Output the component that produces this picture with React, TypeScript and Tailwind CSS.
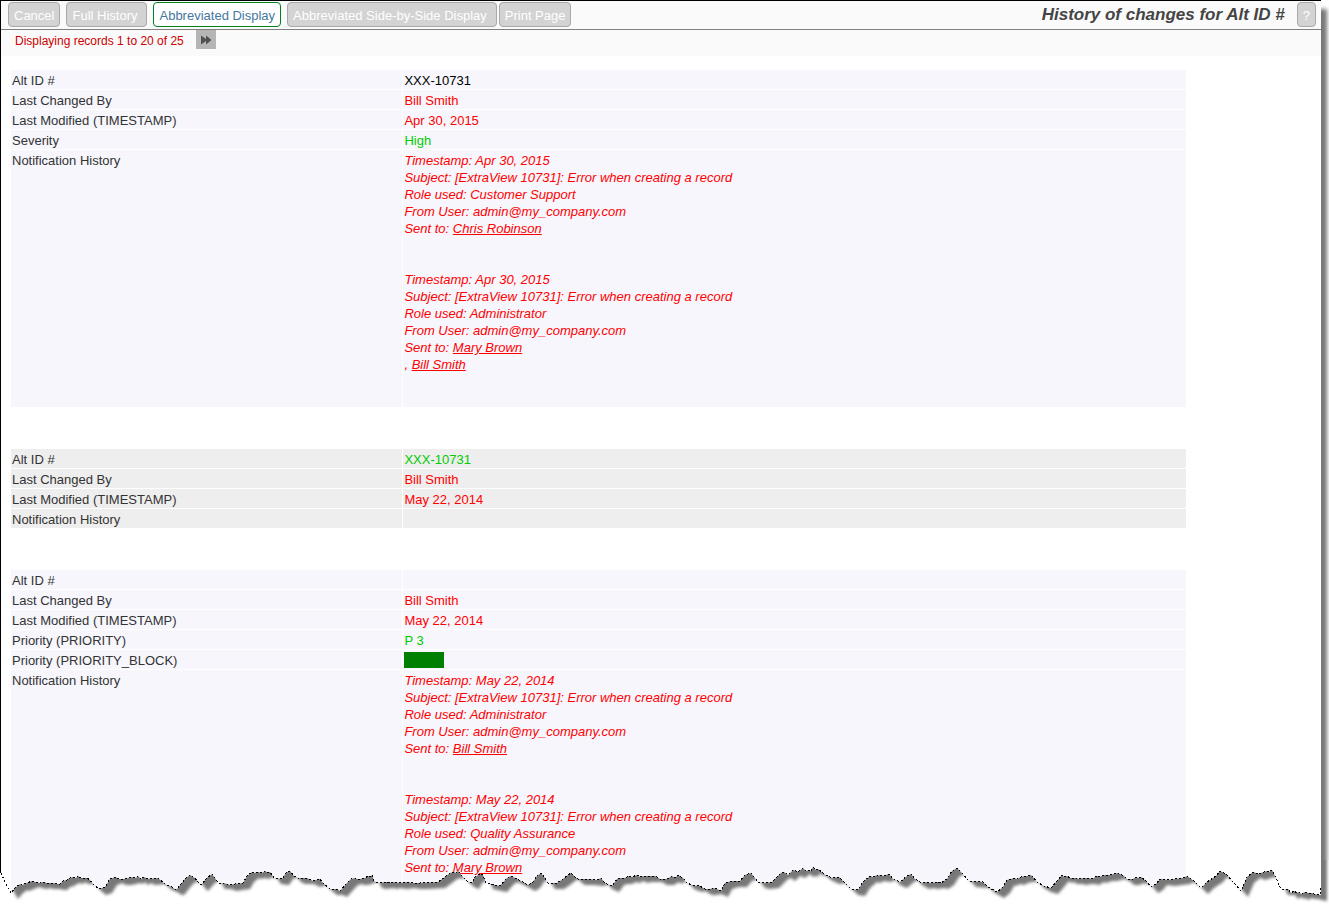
// App.tsx
// History of changes screen: toolbar, record pager and one table per change.

import { Fragment } from "react"

interface Notification {
  timestamp: string
  subject: string
  role: string
  from: string
  sentTo: string[]
}

interface Field {
  label: string
  value?: string
  tone?: "black" | "red" | "green"
  block?: boolean
  notifications?: Notification[]
}

interface Change {
  id: number
  shaded: boolean
  fields: Field[]
}

const SUBJECT = "[ExtraView 10731]: Error when creating a record"
const FROM = "admin@my_company.com"

const CHANGES: Change[] = [
  {
    id: 1,
    shaded: false,
    fields: [
      { label: "Alt ID #", value: "XXX-10731", tone: "black" },
      { label: "Last Changed By", value: "Bill Smith", tone: "red" },
      { label: "Last Modified (TIMESTAMP)", value: "Apr 30, 2015", tone: "red" },
      { label: "Severity", value: "High", tone: "green" },
      {
        label: "Notification History",
        notifications: [
          { timestamp: "Apr 30, 2015", subject: SUBJECT, role: "Customer Support", from: FROM, sentTo: ["Chris Robinson"] },
          { timestamp: "Apr 30, 2015", subject: SUBJECT, role: "Administrator", from: FROM, sentTo: ["Mary Brown", "Bill Smith"] },
        ],
      },
    ],
  },
  {
    id: 2,
    shaded: true,
    fields: [
      { label: "Alt ID #", value: "XXX-10731", tone: "green" },
      { label: "Last Changed By", value: "Bill Smith", tone: "red" },
      { label: "Last Modified (TIMESTAMP)", value: "May 22, 2014", tone: "red" },
      { label: "Notification History" },
    ],
  },
  {
    id: 3,
    shaded: false,
    fields: [
      { label: "Alt ID #" },
      { label: "Last Changed By", value: "Bill Smith", tone: "red" },
      { label: "Last Modified (TIMESTAMP)", value: "May 22, 2014", tone: "red" },
      { label: "Priority (PRIORITY)", value: "P 3", tone: "green" },
      { label: "Priority (PRIORITY_BLOCK)", block: true },
      {
        label: "Notification History",
        notifications: [
          { timestamp: "May 22, 2014", subject: SUBJECT, role: "Administrator", from: FROM, sentTo: ["Bill Smith"] },
          { timestamp: "May 22, 2014", subject: SUBJECT, role: "Quality Assurance", from: FROM, sentTo: ["Mary Brown"] },
        ],
      },
    ],
  },
]

const TONES = {
  black: "text-black",
  red: "text-[#ff0000]",
  green: "text-[#00cc00]",
}

const BUTTON = "h-[25px] rounded border px-[5px] pt-0.5 text-[13px] leading-[17px] whitespace-nowrap"
const BUTTON_OFF = "border-[#a9a9a9] bg-[#d3d3d3] text-white"
const BUTTON_ON = "border-[#008020] bg-white text-[#4477a0]"

function Toolbar() {
  return (
    <header className="flex h-[29px] items-start border-b border-[#808080] bg-[#fafafa] pt-px pr-[5px] pl-[7px]">
      <div className="flex gap-1.5">
        <button type="button" className={`${BUTTON} ${BUTTON_OFF}`}>Cancel</button>
        <button type="button" className={`${BUTTON} ${BUTTON_OFF} pr-[9px]`}>Full History</button>
        <button type="button" className={`${BUTTON} ${BUTTON_ON}`}>Abbreviated Display</button>
        <div className="flex gap-0.5">
          <button type="button" className={`${BUTTON} ${BUTTON_OFF} pr-[9px]`}>
            Abbreviated Side-by-Side Display
          </button>
          <button type="button" className={`${BUTTON} ${BUTTON_OFF}`}>Print Page</button>
        </div>
      </div>
      <h1 className="mr-3 ml-auto text-[17px] leading-[26px] font-bold text-[#444] italic">
        History of changes for Alt ID #
      </h1>
      <button type="button" aria-label="Help" className={`${BUTTON} ${BUTTON_OFF}`}>?</button>
    </header>
  )
}

function Pager() {
  return (
    <nav className="flex h-[26px] items-start gap-3 bg-[#fafafa] pl-3.5 text-xs text-[#cc0000]">
      <span className="pt-[3px]">Displaying records 1 to 20 of 25</span>
      <button type="button" aria-label="Next records" className="flex h-[19px] w-5 items-center justify-center bg-[#b5b5b5]">
        <svg width="12" height="10" viewBox="0 0 12 10" fill="#505050">
          <path d="M1 0.5 L6 4 V0.5 L11.5 5 L6 9.5 V6 L1 9.5 Z" />
        </svg>
      </button>
    </nav>
  )
}

function NotificationList({ items }: { items: Notification[] }) {
  return (
    <div className="text-[#ff0000] italic">
      {items.map((item, i) => (
        <div key={i} className="pb-[34px]">
          <p>Timestamp: {item.timestamp}</p>
          <p>Subject: {item.subject}</p>
          <p>Role used: {item.role}</p>
          <p>From User: {item.from}</p>
          <p>
            Sent to:{" "}
            {item.sentTo.map((name, n) => (
              <Fragment key={name}>
                {n > 0 && <><br />{", "}</>}
                <a href="#" className="underline">{name}</a>
              </Fragment>
            ))}
          </p>
        </div>
      ))}
    </div>
  )
}

function ChangeTable({ change }: { change: Change }) {
  const cell = change.shaded ? "bg-[#eeeeee]" : "bg-[#f6f6fc]"
  return (
    <table className="w-[90%] table-fixed border-separate border-spacing-px">
      <tbody>
        {change.fields.map((field) => (
          <tr key={field.label} className="align-top">
            <th scope="row" className={`${cell} w-1/3 px-px pt-0.5 pb-0 text-left font-normal text-[#333]`}>
              {field.label}
            </th>
            <td className={`${cell} px-px pt-0.5 pb-0 ${field.tone ? TONES[field.tone] : ""}`}>
              {field.value}
              {field.block && <div className="h-4 w-10 bg-[#008000]" />}
              {field.notifications && <NotificationList items={field.notifications} />}
            </td>
          </tr>
        ))}
      </tbody>
    </table>
  )
}

// Ragged lower edge of the sheet, left to right
const EDGE =
  "1,873 5,882 8,888 11,893 15,888 20,884 22,885 27,883 32,881 35,882 40,883 43,882 47,883 53,883 57,884 60,884 63,881 67,880 70,878 73,877 76,878 78,876 81,878 87,878 90,880 93,884 " +
  "99,889 105,887 110,879 113,878 115,877 119,879 124,879 129,878 133,877 136,878 138,876 141,879 144,877 148,879 158,878 165,884 170,886 175,889 177,889 185,879 190,875 195,878 198,882 201,885 " +
  "207,878 212,874 215,878 218,883 224,883 230,885 235,884 243,883 247,876 252,872 254,873 258,872 262,873 265,871 267,872 270,872 274,878 282,879 286,873 290,871 294,876 298,878 307,878 313,881 320,879 323,883 330,889 " +
  "336,889 340,891 347,883 351,879 355,878 357,879 360,879 365,878 368,876 370,877 372,875 374,881 378,883 387,882 390,883 393,882 400,883 407,882 413,883 420,883 438,882 445,877 450,873 454,872 456,873 458,871 462,876 467,881 472,883 475,877 480,874 483,875 486,883 495,885 500,886 " +
  "507,878 511,876 517,879 521,881 528,885 533,882 537,876 541,873 545,878 548,883 557,883 563,879 568,875 571,873 575,877 578,879 587,879 597,880 601,878 605,883 612,886 617,879 621,878 625,878 629,876 632,877 637,875 640,877 644,876 650,876 655,876 660,879 " +
  "667,879 672,876 675,878 678,875 683,878 687,883 692,885 696,886 698,885 705,889 710,889 713,888 717,889 721,891 725,883 732,881 740,881 745,875 748,874 751,873 755,878 758,882 763,883 772,882 777,877 781,873 784,872 788,875 793,870 796,871 798,872 803,868 806,871 809,870 811,871 813,867 816,870 818,869 824,874 " +
  "832,878 839,877 845,883 851,889 858,890 863,882 870,876 873,877 877,875 883,876 886,875 889,874 893,879 900,882 907,876 911,874 915,879 922,883 927,882 930,883 938,882 941,883 947,879 952,871 957,868 962,873 969,881 983,882 988,887 997,892 " +
  "1003,887 1007,880 1011,879 1014,878 1017,879 1021,877 1025,876 1028,876 1031,875 1037,882 1044,886 1051,888 1057,881 1062,875 1064,877 1067,876 1070,878 1076,878 1079,879 1084,878 1088,878 1092,879 1097,876 1099,877 1105,875 1110,875 1118,873 1124,876 1127,879 1133,879 1136,877 1138,878 1141,877 1146,881 1151,887 1156,884 1160,879 1168,880 1175,879 " +
  "1183,878 1187,876 1194,881 1201,888 1207,882 1216,876 1220,871 1226,874 1234,883 1241,891 1247,877 1253,872 1256,873 1258,874 1264,872 1267,871 1269,872 1272,870 1276,878 1281,889 1288,889 1291,893 1294,891 1297,893 1299,892 1301,894 1305,892 1308,893 1312,893 1314,894 1320,895"

function TornEdge() {
  return (
    <svg
      aria-hidden="true"
      className="pointer-events-none absolute bottom-0 left-0 h-11 w-full"
      viewBox="0 860 1329 44"
      preserveAspectRatio="none"
    >
      <defs>
        <filter id="soften" filterUnits="userSpaceOnUse" x="-20" y="780" width="1369" height="140">
          <feGaussianBlur stdDeviation="1.6" />
        </filter>
        <clipPath id="below">
          <polygon points={`0,904 0,873 ${EDGE} 1321,895 1321,860 1329,860 1329,904`} />
        </clipPath>
      </defs>
      <g clipPath="url(#below)">
        <rect x="0" y="860" width="1329" height="44" fill="#fff" />
        <g filter="url(#soften)">
          <polygon points={`1,800 ${EDGE} 1320,800`} transform="translate(7 6)" fill="#787878" />
        </g>
      </g>
      <polyline
        points={`${EDGE} 1320,887`}
        fill="none"
        stroke="#000"
        strokeDasharray="2 2"
        shapeRendering="crispEdges"
      />
    </svg>
  )
}

export default function App() {
  return (
    <div className="relative h-screen overflow-hidden bg-white pr-2 font-['Liberation_Sans',Arial,sans-serif] text-[13px] leading-[17px]">
      <div className="h-full border-t border-l border-black bg-white shadow-[6px_9px_4px_#787878]">
        <Toolbar />
        <Pager />
        <main className="flex flex-col gap-10 pt-[13px] pr-[3px] pl-[9px]">
          {CHANGES.map((change) => (
            <ChangeTable key={change.id} change={change} />
          ))}
        </main>
      </div>
      <TornEdge />
    </div>
  )
}
